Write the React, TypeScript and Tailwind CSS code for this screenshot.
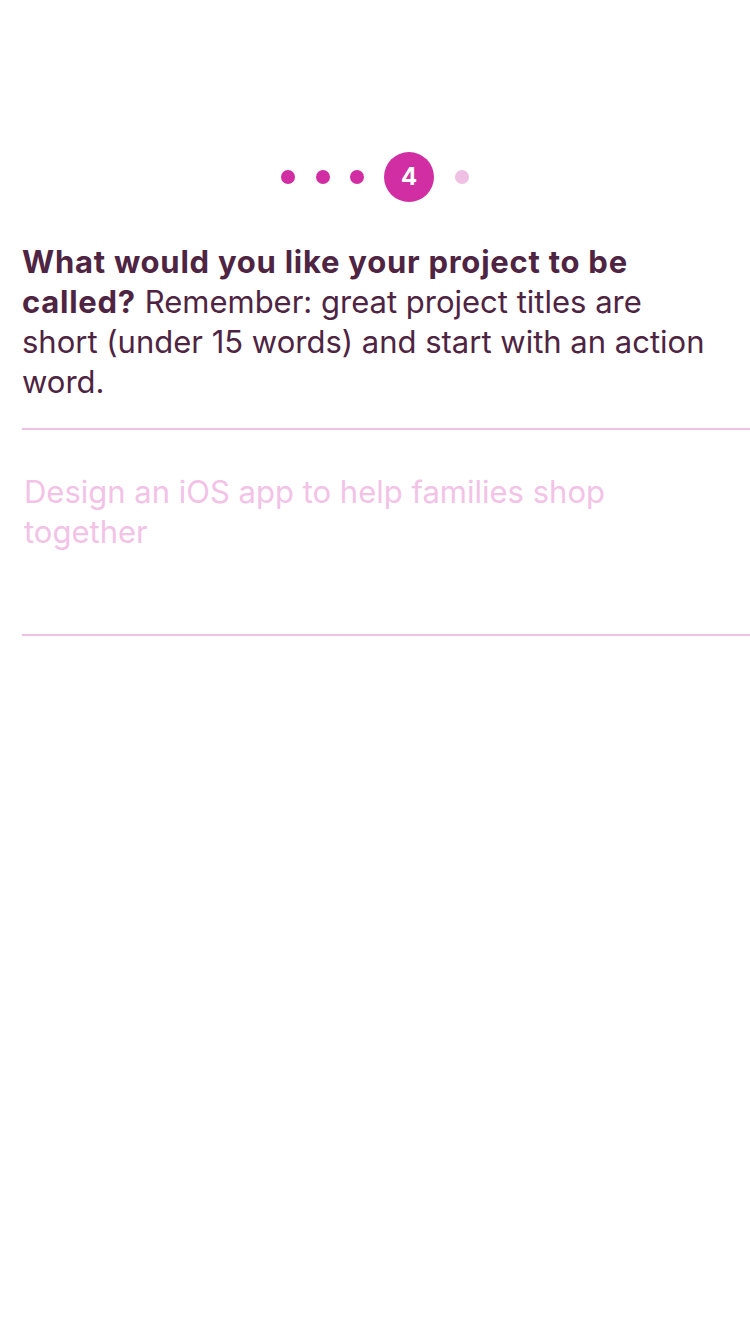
import React from "react";

export default function App() {
  return (
    <div
      className="w-[750px] h-[1334px] bg-white"
      style={{ fontFamily: "Inter, 'Noto Sans', sans-serif" }}
    >
      <div className="pt-[152px] flex items-center justify-center">
        <div className="flex items-center">
          <span className="w-[14px] h-[14px] rounded-full bg-[#d02ea2]" />
          <span className="w-[14px] h-[14px] rounded-full bg-[#d02ea2] ml-[21px]" />
          <span className="w-[14px] h-[14px] rounded-full bg-[#d02ea2] ml-[20px]" />
          <span className="w-[50px] h-[50px] rounded-full bg-[#d02ea2] ml-[20px] flex items-center justify-center text-white text-[24px] font-bold">
            4
          </span>
          <span className="w-[14px] h-[14px] rounded-full bg-[#f0c0e4] ml-[21px]" />
        </div>
      </div>
      <div className="pl-[22px] pr-[28px] pt-[40px]">
        <p className="text-[31px] leading-[40px] text-[#4e2442]">
          <span className="font-bold tracking-[0.75px]">
            What would you like your project to be called?
          </span>{" "}
          Remember: great project titles are short (under 15 words) and start with an action
          word.
        </p>
      </div>
      <div className="ml-[22px] mt-[26px] h-[2px] bg-[#f0c0e4]" />
      <div className="pl-[24px] pr-[120px] pt-[42px] h-[204px]">
        <p className="text-[31px] leading-[40px] text-[#f2c3e6]">
          Design an iOS app to help families shop together
        </p>
      </div>
      <div className="ml-[22px] h-[2px] bg-[#f0c0e4]" />
    </div>
  );
}
